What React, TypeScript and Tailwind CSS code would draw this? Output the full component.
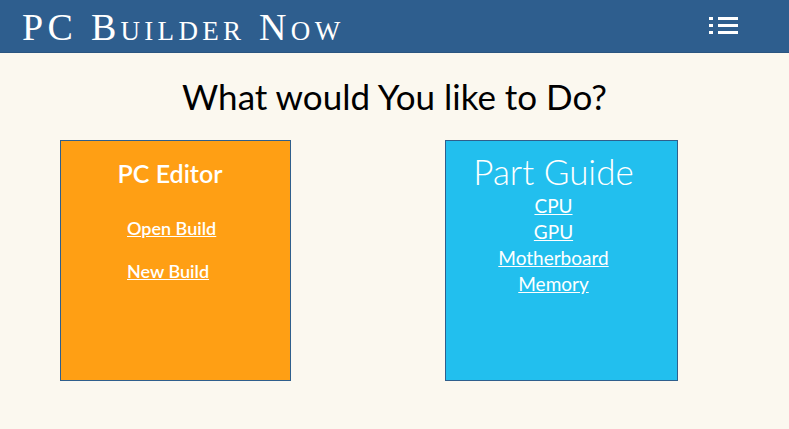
import type { ReactNode } from 'react'

const guideLinks = ['CPU', 'GPU', 'Motherboard', 'Memory']

const MenuIcon = () => (
  <svg width="29" height="18" viewBox="0 0 29 18" fill="#fff">
    <rect x="0" y="0" width="4" height="3" />
    <rect x="9" y="0" width="20" height="3" />
    <rect x="0" y="7" width="4" height="3" />
    <rect x="9" y="7" width="20" height="3" />
    <rect x="0" y="14" width="4" height="3" />
    <rect x="9" y="14" width="20" height="3" />
  </svg>
)

const Tile = ({ className, children }: { className: string; children: ReactNode }) => (
  <div className={`h-[241px] border border-[#2f5f8c] ${className}`}>
    {children}
  </div>
)

export default function App() {
  return (
    <div className="min-h-[429px] bg-[#fbf8ef] font-['Lato',sans-serif]">
      <header className="h-[53px] bg-[#2e5e8e] border-b border-[#2a5580] flex items-center justify-between pl-[22px] pr-[51px]">
        <h1 className="font-['Liberation_Serif',serif] [font-variant:small-caps] text-[38px] leading-none tracking-[4.3px] text-white pt-[2px]">
          PC Builder Now
        </h1>
        <MenuIcon />
      </header>

      <h2 className="text-center text-[35px] text-black mt-[21px] leading-[44px]">
        What would You like to Do?
      </h2>

      <div className="flex gap-[154px] pl-[60px] mt-[22px]">
        <Tile className="w-[231px] bg-[#ff9f14]">
          <div className="pt-[17px] pl-[56px] text-white">
            <h3 className="text-[25px] font-semibold leading-[30px] text-center w-[106px]">
              PC Editor
            </h3>
            <ul className="mt-[28px] pl-[10px] space-y-[18px]">
              <li>
                <a href="#" className="underline text-[18px] font-semibold leading-[24px]">
                  Open Build
                </a>
              </li>
              <li>
                <a href="#" className="underline text-[18px] font-semibold leading-[24px]">
                  New Build
                </a>
              </li>
            </ul>
          </div>
        </Tile>

        <Tile className="w-[233px] bg-[#22bfee]">
          <div className="pt-[8px] pr-[16px] flex flex-col items-center text-white">
            <h3 className="text-[35px] font-light leading-[44px]">Part Guide</h3>
            {guideLinks.map((l) => (
              <a
                key={l}
                href="#"
                className="underline text-[19px] font-normal leading-[26px]"
              >
                {l}
              </a>
            ))}
          </div>
        </Tile>
      </div>
    </div>
  )
}
